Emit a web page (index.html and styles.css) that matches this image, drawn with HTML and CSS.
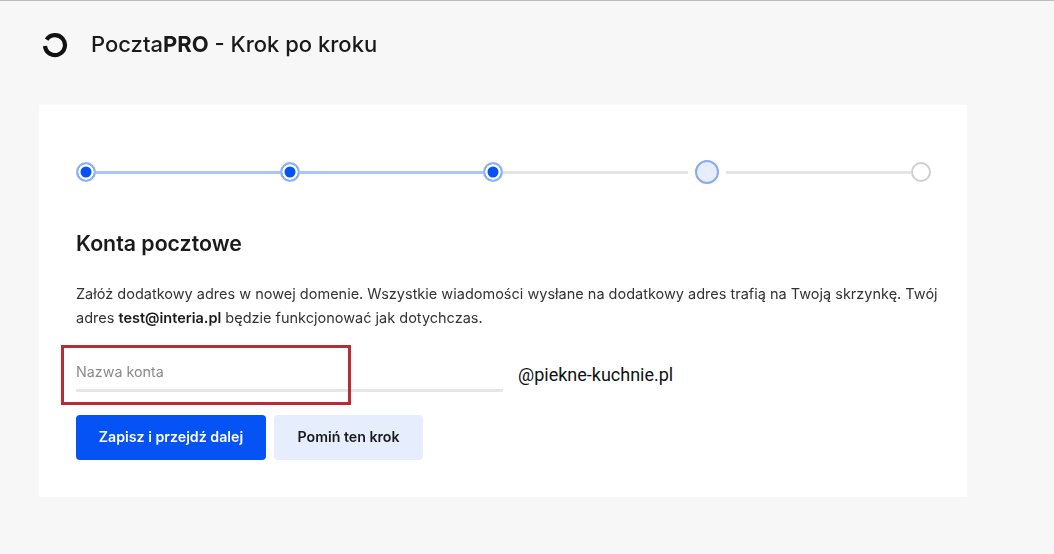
FILE: index.html
```html
<!DOCTYPE html>
<html lang="pl">
<head>
<meta charset="utf-8">
<title>PocztaPRO - Krok po kroku</title>
<link rel="stylesheet" href="styles.css">
</head>
<body>
<header class="topbar">
  <svg class="logo" viewBox="0 0 26 26" width="26" height="26" aria-hidden="true">
    <path d="M4.6 7.6A10 10 0 1 1 3 14" fill="none" stroke="#111" stroke-width="4.2"/>
  </svg>
  <h1 class="title">Poczta<b>PRO</b> - Krok po kroku</h1>
</header>
<main class="card">
  <div class="stepper">
    <span class="dot done"></span><span class="line on"></span>
    <span class="dot done"></span><span class="line on"></span>
    <span class="dot done"></span><span class="line"></span>
    <span class="dot current"></span><span class="line"></span>
    <span class="dot"></span>
  </div>
  <h2 class="heading">Konta pocztowe</h2>
  <p class="desc">Załóż dodatkowy adres w nowej domenie. Wszystkie wiadomości wysłane na dodatkowy adres trafią na Twoją skrzynkę. Twój adres <b>test@interia.pl</b> będzie funkcjonować jak dotychczas.</p>
  <div class="account">
    <div class="field"><span class="placeholder">Nazwa konta</span></div>
    <span class="domain">@piekne-kuchnie.pl</span>
    <span class="highlight"></span>
  </div>
  <div class="actions">
    <button class="btn primary">Zapisz i przejdź dalej</button>
    <button class="btn secondary">Pomiń ten krok</button>
  </div>
</main>
</body>
</html>
```
FILE: styles.css
```css
* { box-sizing: border-box; }
html, body { margin: 0; height: 100%; }
body {
  background: #f7f7f7;
  border-top: 1px solid #bdbdbd;
  font-family: Inter, "Liberation Sans", sans-serif;
  color: #1a1a1a;
  overflow: hidden;
}
.topbar {
  display: flex;
  align-items: center;
  height: 104px;
  padding: 0 0 15px 42px;
}
.logo { display: block; flex: none; margin-bottom: 1px; }
.title {
  margin: 0 0 4px 23px;
  font-size: 22px;
  font-weight: 500;
  line-height: 30px;
  filter: blur(0.4px);
}
.title b { font-weight: 700; }
.card {
  width: 928px;
  height: 392px;
  margin-left: 39px;
  padding: 55px 36px 0 37px;
  background: #fff;
}
.stepper {
  display: flex;
  align-items: center;
  height: 24px;
}
.dot {
  flex: none;
  width: 20px;
  height: 20px;
  border-radius: 50%;
  border: 2px solid #cfcfcf;
  background: #fff;
}
.dot.done {
  border-color: #8fb2f5;
  background: #0553f5;
  box-shadow: inset 0 0 0 2.5px #fff;
}
.dot.current {
  width: 24px;
  height: 24px;
  margin: 0 7px;
  border-color: #8aa9ee;
  background: #e6edfc;
}
.line {
  flex: 1;
  height: 3px;
  background: #e4e4e4;
}
.line.on { flex: 0 0 183.5px; background: #aac6f7; }
.heading {
  margin: 45px 0 0;
  font-size: 21.3px;
  font-weight: 600;
  line-height: 28px;
  filter: blur(0.4px);
}
.desc {
  margin: 25px -18px 0 0;
  font-size: 14.5px;
  line-height: 24px;
  color: #333;
  filter: blur(0.5px);
}
.desc b { font-weight: 600; color: #1a1a1a; }
.account {
  position: relative;
  display: flex;
  align-items: flex-end;
  margin-top: 21px;
}
.field {
  width: 427px;
  height: 41px;
  border-bottom: 3px solid #e6e6e6;
  padding-top: 11px;
}
.placeholder {
  font-size: 14.3px;
  line-height: 20px;
  color: #8a8a8a;
  filter: blur(0.5px);
  display: block;
}
.domain {
  margin: 0 0 5px 15px;
  font-family: Roboto, sans-serif;
  font-size: 18px;
  line-height: 24px;
  color: #111;
}
.highlight {
  position: absolute;
  left: -15px;
  top: -6px;
  width: 290px;
  height: 60px;
  border: 3px solid #b92c36;
}
.actions {
  display: flex;
  gap: 8px;
  margin-top: 23px;
}
.btn {
  height: 45px;
  padding: 0 0 2px;
  border: 0;
  border-radius: 4px;
  font-family: inherit;
  font-size: 14.2px;
  font-weight: 600;
  filter: blur(0.3px);
}
.btn.primary { width: 190px; background: #0553f5; color: #fff; }
.btn.secondary { width: 149px; background: #e6edfc; color: #1a1a1a; }
```
